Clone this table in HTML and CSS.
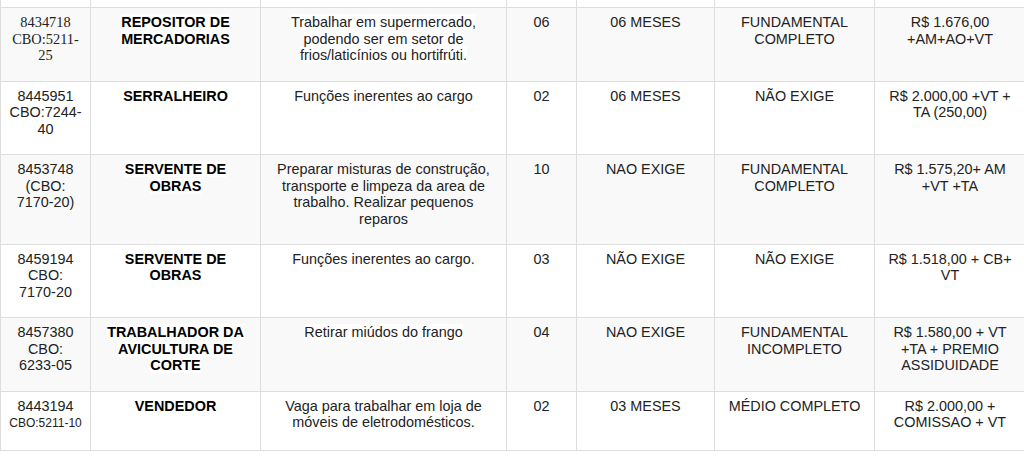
FILE: index.html
```html
<!DOCTYPE html>
<html lang="pt-BR">
<head>
<meta charset="utf-8">
<title>Vagas</title>
<link rel="stylesheet" href="styles.css">
</head>
<body>
<div class="viewport">
<table class="vagas">
<colgroup>
<col class="c-cod"><col class="c-cargo"><col class="c-desc"><col class="c-qtd"><col class="c-exp"><col class="c-esc"><col class="c-sal">
</colgroup>
<tbody>
<tr class="stub"><td></td><td></td><td></td><td></td><td></td><td></td><td></td></tr>
<tr class="odd h3">
<td class="serif">8434718 CBO:5211-25</td>
<td class="cargo"><span class="hl">REPOSITOR DE MERCADORIAS</span></td>
<td><span class="hl">Trabalhar em supermercado, podendo ser em setor de frios/laticínios ou hortifrúti.</span></td>
<td>06</td>
<td>06 MESES</td>
<td>FUNDAMENTAL COMPLETO</td>
<td>R$ 1.676,00 +AM+AO+VT</td>
</tr>
<tr class="h3">
<td>8445951 CBO:7244-40</td>
<td class="cargo">SERRALHEIRO</td>
<td>Funções inerentes ao cargo</td>
<td>02</td>
<td>06 MESES</td>
<td>NÃO EXIGE</td>
<td>R$ 2.000,00 +VT + TA (250,00)</td>
</tr>
<tr class="odd h4">
<td>8453748 (CBO: 7170-20)</td>
<td class="cargo"><span class="hl">SERVENTE DE OBRAS</span></td>
<td>Preparar misturas de construção, transporte e limpeza da area de trabalho. Realizar pequenos reparos</td>
<td>10</td>
<td>NAO EXIGE</td>
<td>FUNDAMENTAL COMPLETO</td>
<td>R$ 1.575,20+ AM +VT +TA</td>
</tr>
<tr class="h3">
<td>8459194 CBO: 7170-20</td>
<td class="cargo">SERVENTE DE OBRAS</td>
<td>Funções inerentes ao cargo.</td>
<td>03</td>
<td>NÃO EXIGE</td>
<td>NÃO EXIGE</td>
<td>R$ 1.518,00 + CB+ VT</td>
</tr>
<tr class="odd h3">
<td>8457380 CBO: 6233-05</td>
<td class="cargo"><span class="hl">TRABALHADOR DA AVICULTURA DE CORTE</span></td>
<td><span class="hl">Retirar miúdos do frango</span></td>
<td>04</td>
<td>NAO EXIGE</td>
<td>FUNDAMENTAL INCOMPLETO</td>
<td>R$ 1.580,00 + VT +TA + PREMIO ASSIDUIDADE</td>
</tr>
<tr class="h2">
<td>8443194<br><span class="small">CBO:5211-10</span></td>
<td class="cargo">VENDEDOR</td>
<td>Vaga para trabalhar em loja de móveis de eletrodomésticos.</td>
<td>02</td>
<td>03 MESES</td>
<td>MÉDIO COMPLETO</td>
<td>R$ 2.000,00 + COMISSAO + VT</td>
</tr>
</tbody>
</table>
</div>
</body>
</html>
```
FILE: styles.css
```css
html, body {
  margin: 0;
  padding: 0;
  background: #ffffff;
}

.viewport {
  width: 1024px;
  height: 475px;
  overflow: hidden;
}

.vagas {
  border-collapse: collapse;
  table-layout: fixed;
  width: 1025px;
  font-family: "Liberation Sans", Arial, sans-serif;
  font-size: 14.4px;
  line-height: 16.5px;
  color: #222222;
}

.c-cod { width: 90px; }
.c-cargo { width: 170px; }
.c-desc { width: 246px; }
.c-qtd { width: 70px; }
.c-exp { width: 138px; }
.c-esc { width: 160px; }
.c-sal { width: 151px; }

.vagas td {
  border: 1px solid #dddddd;
  padding: 6px 8px;
  text-align: center;
  vertical-align: top;
}

.vagas tr.stub td {
  border-top: none;
  padding: 0;
  height: 7px;
}

.vagas tr.odd td {
  background: #f9f9f9;
}

.h2 { height: 59px; }
.h3 { height: 73.5px; }
.h4 { height: 89.5px; }

.vagas td.serif {
  font-family: "Liberation Serif", "Times New Roman", serif;
}

.vagas td.cargo {
  font-weight: bold;
  color: #000000;
}

.hl {
  background: #ffffff;
}

.small {
  font-size: 12px;
}
```
